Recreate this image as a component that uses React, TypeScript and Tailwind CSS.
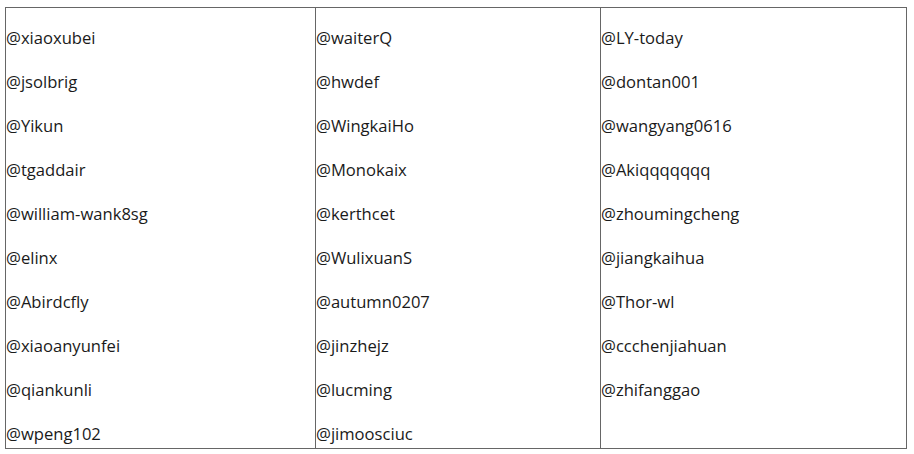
import React from "react";

const cols: string[][] = [
  ["@xiaoxubei", "@jsolbrig", "@Yikun", "@tgaddair", "@william-wank8sg", "@elinx", "@Abirdcfly", "@xiaoanyunfei", "@qiankunli", "@wpeng102"],
  ["@waiterQ", "@hwdef", "@WingkaiHo", "@Monokaix", "@kerthcet", "@WulixuanS", "@autumn0207", "@jinzhejz", "@lucming", "@jimoosciuc"],
  ["@LY-today", "@dontan001", "@wangyang0616", "@Akiqqqqqqq", "@zhoumingcheng", "@jiangkaihua", "@Thor-wl", "@ccchenjiahuan", "@zhifanggao"],
];

export default function App() {
  return (
    <div className="bg-white w-[914px] h-[454px] pt-[7px] pl-[5px]" style={{ fontFamily: '"Open Sans", sans-serif' }}>
      <div className="flex w-[902px] h-[442px] border border-[#666] text-[16.6px] leading-[28px] text-[#1a1a1a]">
        <div className="w-[309px] flex flex-col gap-4 pt-4">
          {cols[0].map((n) => (
            <div key={n}>{n}</div>
          ))}
        </div>
        <div className="w-[285px] border-l border-[#666] flex flex-col gap-4 pt-4">
          {cols[1].map((n) => (
            <div key={n}>{n}</div>
          ))}
        </div>
        <div className="flex-1 border-l border-[#666] flex flex-col gap-4 pt-4">
          {cols[2].map((n) => (
            <div key={n}>{n}</div>
          ))}
        </div>
      </div>
    </div>
  );
}
